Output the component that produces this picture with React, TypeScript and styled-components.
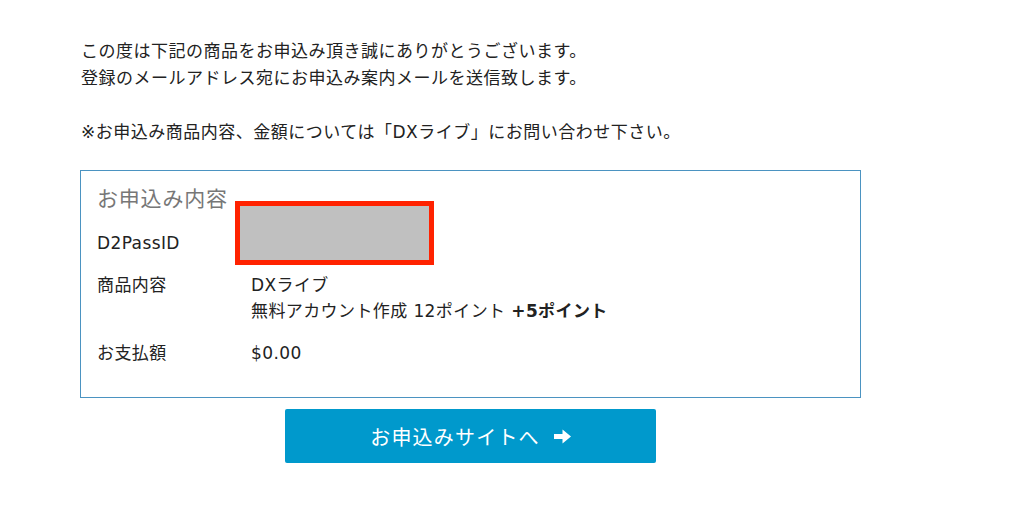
import React from "react";
import styled, { createGlobalStyle } from "styled-components";

const Global = createGlobalStyle`
  html, body { margin: 0; padding: 0; background: #fff; }
  body {
    font-family: "DejaVu Sans", "Noto Sans CJK JP", sans-serif;
    color: #222;
  }
`;

const Page = styled.div`
  width: 781px;
  margin-left: 80px;
  padding-top: 38px;
`;

const Intro = styled.p`
  margin: 0 0 0 1px;
  font-size: 17px;
  line-height: 27px;
  letter-spacing: 0.5px;
  color: #222;
`;

const Panel = styled.section`
  margin-top: 24px;
  border: 1px solid #4b93c1;
  padding: 14px 16px 24px 16px;
  height: 228px;
  box-sizing: border-box;
`;

const PanelTitle = styled.h2`
  margin: 0;
  font-size: 21px;
  font-weight: 400;
  letter-spacing: 0.8px;
  color: #777;
  line-height: 28px;
`;

const Rows = styled.div`
  display: grid;
  grid-template-columns: 154px 1fr;
  row-gap: 16px;
  margin-top: 17px;
`;

const Label = styled.div`
  font-size: 17px;
  line-height: 26px;
  letter-spacing: 0.4px;
  color: #222;
`;

const Value = styled.div`
  position: relative;
  font-size: 17px;
  line-height: 26px;
  letter-spacing: 0.4px;
  color: #222;
  min-height: 26px;
`;

const Redaction = styled.div`
  position: absolute;
  left: -16px;
  top: -29px;
  width: 199px;
  height: 64px;
  box-sizing: border-box;
  border: 5px solid #ff2200;
  background: #c0c0c0;
`;

const Bold = styled.strong`
  font-weight: 700;
`;

const ButtonRow = styled.div`
  display: flex;
  justify-content: center;
  margin-top: 11px;
`;

const ApplyButton = styled.a`
  display: flex;
  align-items: center;
  justify-content: center;
  gap: 14px;
  width: 371px;
  height: 54px;
  background: #0099cc;
  border-radius: 2px;
  color: #fff;
  font-family: "Noto Sans CJK JP", sans-serif;
  font-size: 20px;
  letter-spacing: 1.2px;
  text-decoration: none;
  box-shadow: 0 10px 0 -7px #c4c4c4;
`;

const Arrow = () => (
  <svg width="17" height="15" viewBox="0 0 17 15" aria-hidden="true">
    <path d="M0 5h8.5V0.5L17 7.5l-8.5 7V10H0z" fill="#fff" />
  </svg>
);

export default function App() {
  return (
    <>
      <Global />
      <Page>
        <Intro>
          この度は下記の商品をお申込み頂き誠にありがとうございます。
          <br />
          登録のメールアドレス宛にお申込み案内メールを送信致します。
          <br />
          <br />
          ※お申込み商品内容、金額については「DXライブ」にお問い合わせ下さい。
        </Intro>
        <Panel>
          <PanelTitle>お申込み内容</PanelTitle>
          <Rows>
            <Label>D2PassID</Label>
            <Value>
              <Redaction />
            </Value>
            <Label>商品内容</Label>
            <Value>
              DXライブ
              <br />
              無料アカウント作成 12ポイント <Bold>+5ポイント</Bold>
            </Value>
            <Label>お支払額</Label>
            <Value>$0.00</Value>
          </Rows>
        </Panel>
        <ButtonRow>
          <ApplyButton href="#">
            お申込みサイトへ
            <Arrow />
          </ApplyButton>
        </ButtonRow>
      </Page>
    </>
  );
}
